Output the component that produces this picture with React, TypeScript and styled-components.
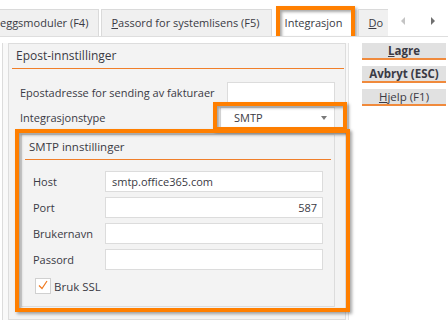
import styled, { createGlobalStyle } from "styled-components";

const GlobalStyle = createGlobalStyle`
  body {
    margin: 0;
    background: #fff;
    font-family: "Open Sans", "Noto Sans", sans-serif;
    font-size: 11px;
    color: #3a3a44;
  }
`;

const Window = styled.div`
  width: 448px;
  height: 326px;
  overflow: hidden;
  background: #fff;
`;

const TabBar = styled.div`
  display: flex;
  height: 36px;
  border-bottom: 1px solid #dedede;
`;

const TabStrip = styled.div`
  flex: 1;
  display: flex;
  align-items: flex-end;
  overflow: hidden;
  padding-top: 9px;
`;

const Tab = styled.div<{ $active?: boolean; $first?: boolean }>`
  position: relative;
  flex-shrink: 0;
  box-sizing: border-box;
  height: 27px;
  line-height: 26px;
  white-space: nowrap;
  padding: ${(p) => (p.$first ? "0 10px 0 0" : p.$active ? "0 9px 0 5px" : "0 11px 0 9px")};
  margin: ${(p) => (p.$active ? "0 6px 0 5px" : "0 2px 0 0")};
  background: ${(p) => (p.$active ? "#fff" : "#f0f0f0")};
  border: 1px solid #dadada;
  border-bottom: none;
  border-left: ${(p) => (p.$first ? "none" : "1px solid #dadada")};
`;

const Highlight = styled.div<{ $inset: string }>`
  position: absolute;
  inset: ${(p) => p.$inset};
  border: 4px solid #ff7f00;
  box-shadow: 2px 2px 3px rgba(0, 0, 0, 0.35),
    inset 2px 2px 3px rgba(0, 0, 0, 0.35);
  pointer-events: none;
`;

const Scroller = styled.div`
  width: 60px;
  display: flex;
  align-items: center;
  justify-content: space-around;
  padding-top: 6px;
  background: #fff;
`;

const Arrow = styled.span<{ $dir: "left" | "right" }>`
  width: 0;
  height: 0;
  border-top: 4px solid transparent;
  border-bottom: 4px solid transparent;
  ${(p) =>
    p.$dir === "left"
      ? "border-right: 4px solid #c4c4c4;"
      : "border-left: 4px solid #707070;"}
`;

const Body = styled.div`
  display: flex;
  align-items: flex-start;
  padding-top: 6px;
`;

const Page = styled.div`
  margin-left: 2px;
  padding: 0 2px 0 5px;
  border-left: 1px solid #dcdcdc;
  border-right: 1px solid #e4e4e4;
  background: #f9f9f9;
`;

const Group = styled.div`
  width: 338px;
  box-sizing: border-box;
  border: 1px solid #dddddd;
  background: #f3f3f3;
  padding-bottom: 12px;
`;

const GroupHeader = styled.div`
  height: 24px;
  line-height: 24px;
  margin: 0 1px 0 3px;
  padding-left: 4px;
  font-size: 12px;
  border-bottom: 1px solid #f07f2a;
`;

const FormRow = styled.div<{ $gap: number; $pad: number }>`
  display: flex;
  align-items: center;
  margin-top: ${(p) => p.$gap}px;
  padding: 0 10px 0 ${(p) => p.$pad}px;
`;

const Label = styled.div<{ $width?: number }>`
  ${(p) => (p.$width ? `width: ${p.$width}px;` : "flex: 1;")}
  white-space: nowrap;
`;

const TextInput = styled.div<{ $width: number; $right?: boolean }>`
  width: ${(p) => p.$width}px;
  height: 21px;
  box-sizing: border-box;
  border: 1px solid #dcdcdc;
  background: #fff;
  padding: 0 5px 0 6px;
  line-height: 19px;
  text-align: ${(p) => (p.$right ? "right" : "left")};
`;

const Dropdown = styled.div`
  position: relative;
  width: 115px;
  height: 21px;
  box-sizing: border-box;
  border: 1px solid #dcdcdc;
  background: #fff;
  display: flex;
  align-items: center;
  justify-content: space-between;
  padding: 0 7px 0 13px;
`;

const Caret = styled.span`
  width: 0;
  height: 0;
  border-left: 3.5px solid transparent;
  border-right: 3.5px solid transparent;
  border-top: 4px solid #7a7a7a;
`;

const SubGroup = styled.div`
  position: relative;
  margin: 6px 10px 0 12px;
  border: 1px solid #dcdcdc;
  background: #f3f3f3;
  padding-bottom: 12px;
`;

const SubHeader = styled.div`
  height: 25px;
  box-sizing: border-box;
  line-height: 24px;
  margin: 0 3px;
  padding-left: 4px;
  font-size: 11.5px;
  box-shadow: inset 0 -1px 0 #f07f2a;
`;

const CheckRow = styled.div`
  display: flex;
  align-items: center;
  gap: 3px;
  margin-top: 8px;
  padding-left: 13px;
  font-size: 11.5px;
`;

const CheckBox = styled.div`
  width: 16px;
  height: 16px;
  box-sizing: border-box;
  border: 1px solid #d0d0d0;
  background: #fff;
  display: flex;
`;

const Buttons = styled.div`
  display: flex;
  flex-direction: column;
  gap: 6px;
  margin-left: 13px;
`;

const Button = styled.div<{ $bold?: boolean }>`
  width: 84px;
  height: 17px;
  box-sizing: border-box;
  background: #e1e1e1;
  border-bottom: 2px solid #f08a3c;
  text-align: center;
  line-height: 15px;
  font-size: 11.5px;
  font-weight: ${(p) => (p.$bold ? 700 : 400)};
`;

const smtpFields = [
  { label: "Host", value: "smtp.office365.com" },
  { label: "Port", value: "587", right: true },
  { label: "Brukernavn", value: "" },
  { label: "Passord", value: "" },
];

export default function App() {
  return (
    <Window>
      <GlobalStyle />
      <TabBar>
        <TabStrip>
          <Tab $first>eggsmoduler (F4)</Tab>
          <Tab>
            <u>P</u>assord for systemlisens (F5)
          </Tab>
          <Tab $active>
            Integrasjon
            <Highlight $inset="-4px -4px -4px -4px" />
          </Tab>
          <Tab>
            <u>D</u>o
          </Tab>
        </TabStrip>
        <Scroller>
          <Arrow $dir="left" />
          <Arrow $dir="right" />
        </Scroller>
      </TabBar>

      <Body>
        <Page>
          <Group>
            <GroupHeader>Epost-innstillinger</GroupHeader>
            <FormRow $gap={13} $pad={11}>
              <Label>Epostadresse for sending av fakturaer</Label>
              <TextInput $width={108} />
            </FormRow>
            <FormRow $gap={4} $pad={11}>
              <Label>Integrasjonstype</Label>
              <Dropdown>
                SMTP
                <Caret />
                <Highlight $inset="-6px -13px -4px -8px" />
              </Dropdown>
            </FormRow>

            <SubGroup>
              <SubHeader>SMTP innstillinger</SubHeader>
              {smtpFields.map((f, i) => (
                <FormRow key={f.label} $gap={i === 0 ? 11 : 5} $pad={11}>
                  <Label $width={72}>{f.label}</Label>
                  <TextInput $width={218} $right={f.right}>
                    {f.value}
                  </TextInput>
                </FormRow>
              ))}
              <CheckRow>
                <CheckBox>
                  <svg width="14" height="14" viewBox="0 0 14 14">
                    <polyline
                      points="3,6.5 6,9.5 11,2"
                      fill="none"
                      stroke="#f07a20"
                      strokeWidth="1.2"
                    />
                  </svg>
                </CheckBox>
                Bruk SSL
              </CheckRow>
              <Highlight $inset="-6px -16px -6px -7px" />
            </SubGroup>
          </Group>
        </Page>

        <Buttons>
          <Button $bold>
            <u>L</u>agre
          </Button>
          <Button $bold>Avbryt (ESC)</Button>
          <Button>
            <u>H</u>jelp (F1)
          </Button>
        </Buttons>
      </Body>
    </Window>
  );
}
